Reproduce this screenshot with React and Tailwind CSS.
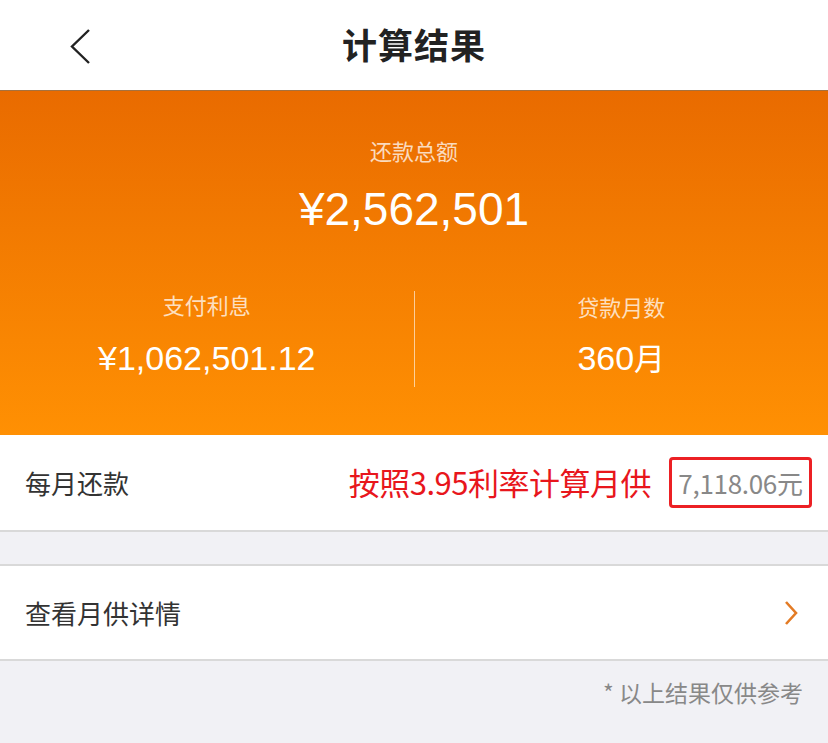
import React from "react";

const font = { fontFamily: '"Noto Sans CJK SC", "Noto Sans", sans-serif' };
const num = { fontFamily: '"Liberation Sans", "Noto Sans", sans-serif' };

const App = () => {
  return (
    <div className="w-[828px] h-[743px] bg-[#f1f1f5] overflow-hidden" style={font}>
      {/* Nav bar */}
      <div className="relative h-[91px] bg-white flex items-center justify-center border-b border-[#a5713f]">
        <svg className="absolute left-[68px] top-[28px]" width="24" height="37" viewBox="0 0 24 37" fill="none">
          <path d="M21 2 L4 18.5 L21 35" stroke="#222" strokeWidth="2.4" />
        </svg>
        <h1 className="text-[35px] font-bold text-[#222] leading-none -mt-[4px] tracking-[1px]">计算结果</h1>
      </div>

      {/* Summary */}
      <div className="h-[344px] bg-gradient-to-b from-[#e96b00] to-[#ff9003] flex flex-col text-white">
        <div className="flex flex-col items-center pt-[48px]">
          <div className="text-[22px] leading-none text-white/75">还款总额</div>
          <div className="text-[46px] leading-none mt-[25px]" style={num}>
            ¥2,562,501
          </div>
        </div>
        <div className="flex mt-[59px]">
          <div className="flex-1 flex flex-col items-center pt-[2px]">
            <div className="text-[22px] leading-none text-white/75">支付利息</div>
            <div className="text-[34px] leading-none mt-[26px]" style={num}>
              ¥1,062,501.12
            </div>
          </div>
          <div className="w-px h-[96px] bg-white/60" />
          <div className="flex-1 flex flex-col items-center pt-[4px]">
            <div className="text-[22px] leading-none text-white/75">贷款月数</div>
            <div className="text-[34px] leading-none mt-[24px] flex items-baseline" style={num}>
              360<span className="text-[31px]" style={font}>月</span>
            </div>
          </div>
        </div>
      </div>

      {/* Monthly payment */}
      <div className="h-[97px] bg-white flex items-center pl-[25px] pr-[16px] border-b-2 border-[#d9d9d9]">
        <span className="text-[26px] text-[#333]">每月还款</span>
        <span className="ml-auto text-[31px] text-[#e8161c] tracking-[-0.5px]">按照3.95利率计算月供</span>
        <div className="ml-[18px] w-[143px] h-[51px] border-[3px] border-[#ec2024] rounded-[4px] flex items-center justify-center">
          <span className="text-[26px] text-[#888] tracking-[-0.3px]">7,118.06元</span>
        </div>
      </div>

      <div className="h-[34px] border-b-2 border-[#d9d9d9]" />

      {/* Detail link */}
      <div className="h-[95px] bg-white flex items-center pl-[25px] pr-[30px] border-b-2 border-[#d9d9d9]">
        <span className="text-[26px] text-[#333]">查看月供详情</span>
        <svg className="ml-auto" width="14" height="26" viewBox="0 0 14 26" fill="none">
          <path d="M2 2 L12 13 L2 24" stroke="#e37b25" strokeWidth="2.6" />
        </svg>
      </div>

      <div className="flex justify-end pr-[25px] pt-[14px]">
        <span className="text-[23px] text-[#888]">* 以上结果仅供参考</span>
      </div>
    </div>
  );
};

export default App;
